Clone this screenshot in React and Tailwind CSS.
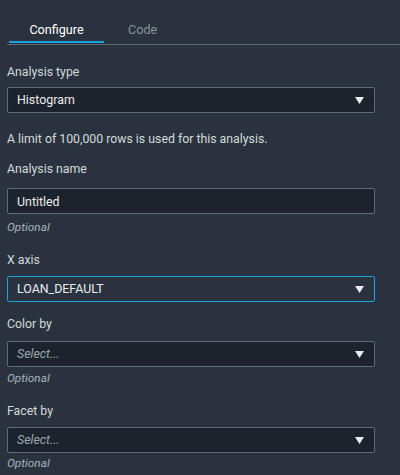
import { useState } from "react";

function Caret() {
  return (
    <svg width="9" height="7" viewBox="0 0 9 7" className="shrink-0">
      <polygon points="0,0 9,0 4.5,7" fill="#e9ebed" />
    </svg>
  );
}

function SelectBox({ value, placeholder, focused }) {
  return (
    <div
      className={`h-[26px] flex items-center justify-between pl-[9px] pr-[10px] rounded-[2px] border ${
        focused ? "border-[#17a3dc] bg-[#29323e]" : "border-[#5f6b7a] bg-[#1d232c]"
      }`}
    >
      {value ? (
        <span className="text-[#eaeded] text-[12.4px]">{value}</span>
      ) : (
        <span className="text-[#9ba7b0] text-[12.4px] italic">{placeholder}</span>
      )}
      <Caret />
    </div>
  );
}

export default function App() {
  const [tab, setTab] = useState("configure");
  const [name, setName] = useState("Untitled");

  return (
    <div className="w-[400px] h-[475px] overflow-hidden bg-[#29323e] font-['Roboto',sans-serif] text-[12.3px] leading-[16px]">
      {/* Tabs */}
      <div className="pl-[7px]">
        <div className="flex items-end h-[45px] border-b border-[#5f6b7a]">
          <button
            onClick={() => setTab("configure")}
            className={`ml-[2px] mb-[1px] w-[95px] h-[43px] pt-[18px] text-center text-[12.6px] leading-[16px] self-start border-b-2 ${
              tab === "configure" ? "text-white border-[#17a3dc]" : "text-[#879596] border-transparent"
            }`}
          >
            Configure
          </button>
          <button
            onClick={() => setTab("code")}
            className={`mb-[1px] px-[24px] h-[43px] pt-[18px] text-[12.6px] leading-[16px] self-start border-b-2 ${
              tab === "code" ? "text-white border-[#17a3dc]" : "text-[#879596] border-transparent"
            }`}
          >
            Code
          </button>
        </div>
      </div>

      {/* Form */}
      <div className="pl-[7px] pr-[25px] text-[#d5dbdb]">
        <div className="mt-[19px]">Analysis type</div>
        <div className="mt-[7px]">
          <SelectBox value="Histogram" />
        </div>

        <div className="mt-[18px]">A limit of 100,000 rows is used for this analysis.</div>

        <div className="mt-[14px]">Analysis name</div>
        <input
          value={name}
          onChange={(e) => setName(e.target.value)}
          className="mt-[11px] w-full h-[26px] pl-[9px] rounded-[2px] border border-[#5f6b7a] bg-[#1d232c] text-[#eaeded] text-[12.4px] outline-none"
        />
        <div className="mt-[5px] text-[11.8px] italic text-[#aab4bc]">Optional</div>

        <div className="mt-[17px]">X axis</div>
        <div className="mt-[8px]">
          <SelectBox value="LOAN_DEFAULT" focused />
        </div>

        <div className="mt-[14px]">Color by</div>
        <div className="mt-[9px]">
          <SelectBox placeholder="Select..." />
        </div>
        <div className="mt-[3px] text-[11.8px] italic text-[#aab4bc]">Optional</div>

        <div className="mt-[17px]">Facet by</div>
        <div className="mt-[8px]">
          <SelectBox placeholder="Select..." />
        </div>
        <div className="mt-[2px] text-[11.8px] italic text-[#aab4bc]">Optional</div>
      </div>
    </div>
  );
}
